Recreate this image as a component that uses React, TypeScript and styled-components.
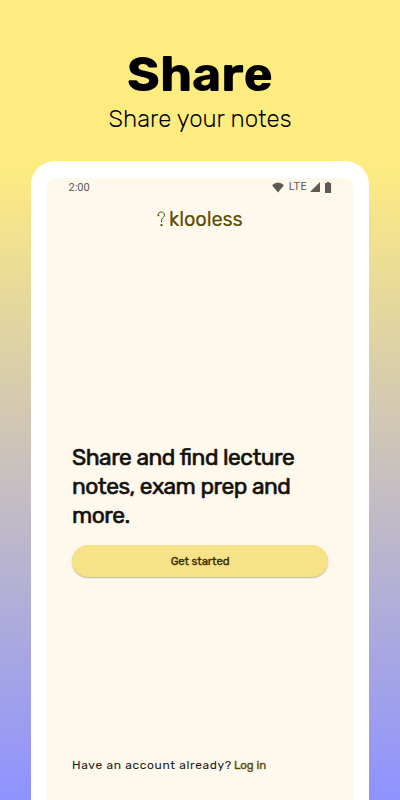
import React from 'react';
import styled, { createGlobalStyle } from 'styled-components';

const GlobalStyle = createGlobalStyle`
  * { box-sizing: border-box; }
  body { margin: 0; font-family: Rubik, Roboto, "Liberation Sans", sans-serif; }
  h1, h2, p { margin: 0; }
`;

const Page = styled.main`
  width: 400px;
  height: 800px;
  overflow: hidden;
  display: flex;
  flex-direction: column;
  align-items: center;
  background: linear-gradient(180deg, #ffec80 0, #ffec80 160px, #8e92ff 100%);
`;

const Hero = styled.header`
  height: 161px;
  flex: none;
  padding-top: 44px;
  text-align: center;
  white-space: nowrap;
  color: #000;
`;

const Title = styled.h1`
  font-size: 49.5px;
  line-height: 60px;
  font-weight: 700;
`;

const Subtitle = styled.p`
  font-size: 24px;
  line-height: 30px;
  font-weight: 300;
`;

const Phone = styled.section`
  width: 338px;
  flex: 1;
  padding: 17px 16px 0;
  background: #fff;
  border-radius: 24px 24px 0 0;
  display: flex;
`;

const Screen = styled.div`
  flex: 1;
  display: flex;
  flex-direction: column;
  background: #fff8ec;
  border-radius: 8px 8px 0 0;
  white-space: nowrap;
`;

const StatusBar = styled.div`
  height: 18px;
  padding: 0 21px 0 21.5px;
  display: flex;
  align-items: center;
  justify-content: space-between;
  font: 400 11px/18px Roboto, sans-serif;
  color: #5c5b56;
`;

const Clock = styled.span`
  padding-top: 1px;
`;

const StatusIcons = styled.div`
  display: flex;
  align-items: center;
  svg { display: block; }
`;

const Network = styled.span`
  margin: 0 3px 0 5px;
  letter-spacing: 0.3px;
`;

const Brand = styled.div`
  height: 44px;
  padding: 1px 0 0 110px;
  display: flex;
  align-items: center;
  gap: 3px;
  color: #594d00;
  font-size: 20px;
  letter-spacing: -0.12px;
  -webkit-text-stroke: 0.1px #594d00;
`;

const Content = styled.div`
  flex: 1;
  display: flex;
  flex-direction: column;
  padding: 203px 25px 0;
`;

const Headline = styled.h2`
  font-size: 22.8px;
  line-height: 29px;
  font-weight: 400;
  letter-spacing: -0.5px;
  font-feature-settings: "liga" 1;
  color: #12110c;
  -webkit-text-stroke: 0.6px #12110c;
`;

const StartButton = styled.button`
  height: 32px;
  margin-top: 15px;
  padding: 0;
  border: 0;
  border-radius: 16px;
  background: #f6e287;
  box-shadow: 0 1px 1.5px rgba(70, 60, 30, 0.35);
  color: #382f00;
  font: 400 11.5px/32px Rubik, Roboto, sans-serif;
  letter-spacing: -0.15px;
  -webkit-text-stroke: 0.35px #382f00;
`;

const Footer = styled.p`
  margin-top: auto;
  height: 43px;
  display: flex;
  gap: 2px;
  font-size: 12px;
  line-height: 17px;
  color: #1d1b16;
  letter-spacing: 0.65px;
`;

const Login = styled.span`
  color: #594d00;
  font-size: 11.5px;
  letter-spacing: 0;
  -webkit-text-stroke: 0.35px #594d00;
`;

const WifiIcon = () => (
  <svg width="12" height="11" viewBox="0 0 12 11">
    <path d="M0 3.2Q6-2 12 3.2L6 10.4Z" fill="#5c5b56" />
  </svg>
);

const SignalIcon = () => (
  <svg width="10" height="10" viewBox="0 0 10 10">
    <path d="M10 0V10H0Z" fill="#5c5b56" />
  </svg>
);

const BatteryIcon = () => (
  <svg width="12" height="11" viewBox="0 0 12 11">
    <path d="M6.8 0h2.6v1H10.5q.6 0 .6.6v8.8q0 .6-.6.6H5.6q-.6 0-.6-.6V1.6q0-.6.6-.6h1.2Z" fill="#5c5b56" />
  </svg>
);

const QuestionLogo = () => (
  <svg width="9" height="16" viewBox="0 0 9 16" fill="none">
    <path
      d="M1.1 4.2C1.1 2.2 2.5 1.1 4.3 1.1C6.2 1.1 7.4 2.3 7.4 4C7.4 5.4 6.7 6.2 5.8 7C4.9 7.8 4.5 8.3 4.5 9.4V11.2"
      stroke="#594d00"
      strokeWidth="1"
    />
    <circle cx="1.4" cy="4.4" r="0.9" fill="#594d00" />
    <circle cx="4.5" cy="14.1" r="1.2" fill="#594d00" />
  </svg>
);

export default function App() {
  return (
    <>
      <GlobalStyle />
      <Page>
        <Hero>
          <Title>Share</Title>
          <Subtitle>Share your notes</Subtitle>
        </Hero>
        <Phone>
          <Screen>
            <StatusBar>
              <Clock>2:00</Clock>
              <StatusIcons>
                <WifiIcon />
                <Network>LTE</Network>
                <SignalIcon />
                <BatteryIcon />
              </StatusIcons>
            </StatusBar>
            <Brand>
              <QuestionLogo />
              <span>klooless</span>
            </Brand>
            <Content>
              <Headline>
                Share and find lecture
                <br />
                notes, exam prep and
                <br />
                more.
              </Headline>
              <StartButton>Get started</StartButton>
              <Footer>
                <span>Have an account already?</span>
                <Login>Log in</Login>
              </Footer>
            </Content>
          </Screen>
        </Phone>
      </Page>
    </>
  );
}
